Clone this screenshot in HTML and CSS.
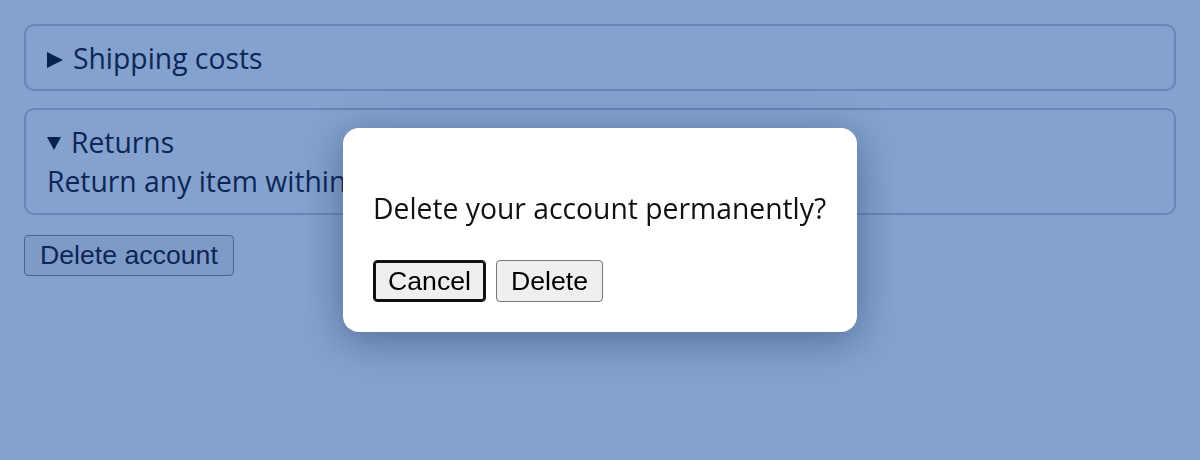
FILE: index.html
```html
<!DOCTYPE html>
<html lang="en">
<head>
<meta charset="utf-8">
<title>Account settings</title>
<link rel="stylesheet" href="styles.css">
</head>
<body>
<main class="page">
  <details class="panel">
    <summary class="panel-title">Shipping costs</summary>
    <p class="panel-body">Free shipping on orders over $50.</p>
  </details>
  <details class="panel" open>
    <summary class="panel-title">Returns</summary>
    <p class="panel-body">Return any item within 30 days.</p>
  </details>
  <div class="actions">
    <button class="page-btn" type="button">Delete account</button>
  </div>
</main>
<div class="dialog" role="dialog" aria-modal="true">
  <p class="dialog-text">Delete your account permanently?</p>
  <div class="dialog-buttons">
    <button class="dlg-btn dlg-btn-focus" type="button">Cancel</button>
    <button class="dlg-btn" type="button">Delete</button>
  </div>
</div>
</body>
</html>
```
FILE: styles.css
```css
html, body {
  margin: 0;
  padding: 0;
}
body {
  background: #84a2cf;
  font-family: "Open Sans", "Noto Sans", sans-serif;
  font-size: 28.3px;
  line-height: 39px;
  color: #0d2655;
  width: 1200px;
  height: 460px;
  overflow: hidden;
}
.page {
  padding: 24px;
  display: flex;
  flex-direction: column;
  gap: 17px;
}
.panel {
  border: 2px solid #6886b5;
  border-radius: 10px;
  padding: 13px 21px 11px;
}
.panel[open] {
  padding-bottom: 12px;
}
.panel-title {
  display: flex;
  align-items: center;
  list-style: none;
  cursor: pointer;
}
.panel-title::-webkit-details-marker {
  display: none;
}
.panel-title::before {
  content: "";
  width: 0;
  height: 0;
  border-top: 8.5px solid transparent;
  border-bottom: 8.5px solid transparent;
  border-left: 16px solid #0a214d;
  margin-right: 10px;
  margin-top: 3px;
}
.panel[open] > .panel-title::before {
  border-left: 7.5px solid transparent;
  border-right: 7.5px solid transparent;
  border-top: 13px solid #0a214d;
  border-bottom: 0;
  margin-right: 10px;
  margin-top: 2px;
}
.panel-body {
  margin: 0;
}
.actions {
  display: flex;
  margin-top: 3px;
}
.page-btn {
  font-family: "Liberation Sans", Arial, sans-serif;
  font-size: 26.67px;
  line-height: 31px;
  padding: 4px 15px;
  color: #0d2655;
  background: #7e9bc8;
  border: 1px solid #4a6592;
  border-radius: 4px;
}
.dialog {
  position: fixed;
  inset: 0;
  margin: auto;
  width: 454px;
  height: 144px;
  padding: 30px;
  background: #ffffff;
  border-radius: 16px;
  box-shadow: 0 8px 40px rgba(20, 40, 80, 0.45);
  color: #111111;
  display: flex;
  flex-direction: column;
}
.dialog-text {
  margin: 31px 0 0;
  white-space: nowrap;
}
.dialog-buttons {
  display: flex;
  gap: 10px;
  margin-top: 32px;
}
.dlg-btn {
  font-family: "Liberation Sans", Arial, sans-serif;
  font-size: 26.67px;
  line-height: 32px;
  padding: 4px 14px;
  color: #000000;
  background: #efefef;
  border: 1px solid #767676;
  border-radius: 4px;
}
.dlg-btn-focus {
  border-color: #101010;
  box-shadow: inset 0 0 0 2px #101010;
}
```
